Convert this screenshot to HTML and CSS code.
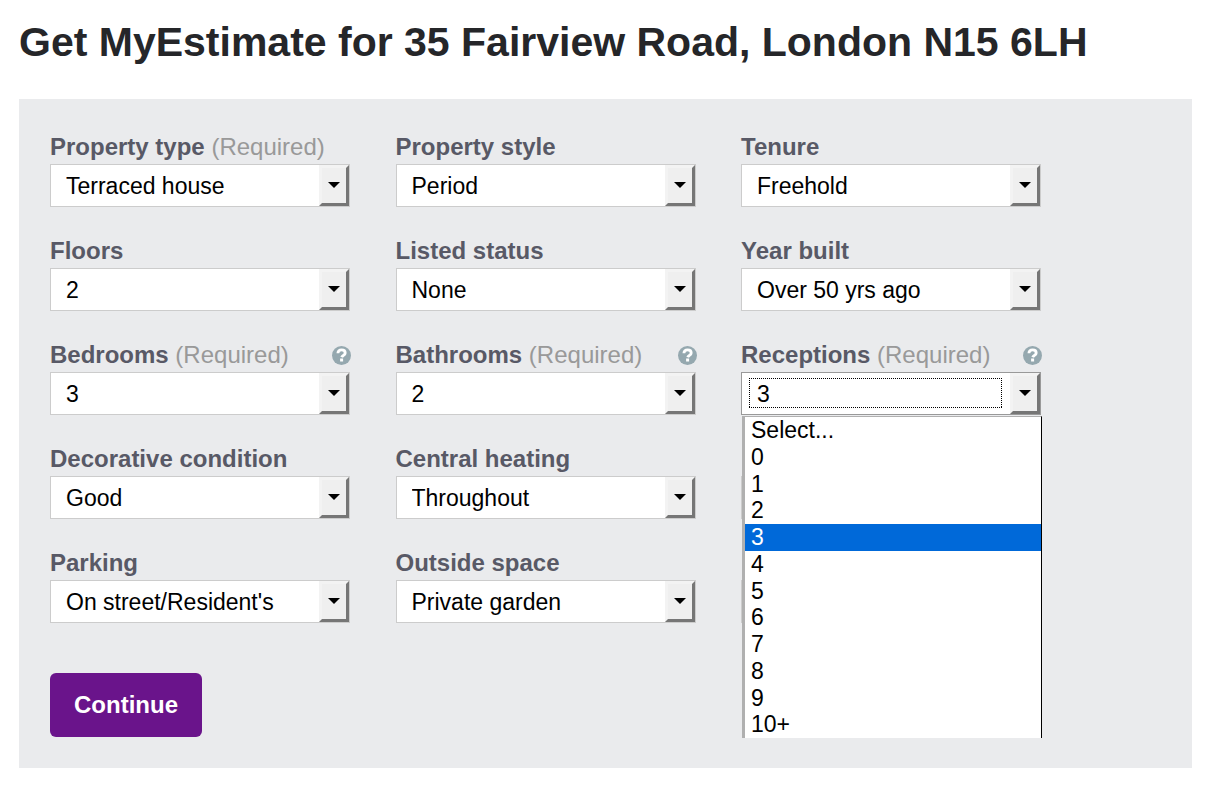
FILE: index.html
```html
<!DOCTYPE html>
<html lang="en">
<head>
    <meta charset="utf-8">
    <title>Get MyEstimate</title>
    <link rel="stylesheet" href="styles.css">
</head>
<body>
    <svg class="icon-defs" aria-hidden="true">
        <symbol id="help-icon" viewBox="0 0 19 19">
            <circle cx="9.5" cy="9.5" r="9.5" fill="#95a8af"/>
            <path d="M5.9 7.3C6 5 7.5 3.9 9.6 3.9c2.1 0 3.6 1.1 3.6 3 0 2.3-2.8 2.4-3.5 4.4" fill="none" stroke="#fff" stroke-width="2.8"/>
            <rect x="8.1" y="12.5" width="3" height="3" fill="#fff"/>
        </symbol>
    </svg>
    <h1 class="page-title">Get MyEstimate for 35 Fairview Road, London N15 6LH</h1>
    <form class="estimate-form">
        <div class="fields">
            <div class="field">
                <div class="field-head">
                    <label for="propertyType">Property type <span class="required">(Required)</span></label>
                </div>
                <div class="select-box">
                    <select id="propertyType"><option>Terraced house</option></select>
                </div>
            </div>
            <div class="field">
                <div class="field-head"><label for="propertyStyle">Property style</label></div>
                <div class="select-box">
                    <select id="propertyStyle"><option>Period</option></select>
                </div>
            </div>
            <div class="field">
                <div class="field-head"><label for="tenure">Tenure</label></div>
                <div class="select-box">
                    <select id="tenure"><option>Freehold</option></select>
                </div>
            </div>

            <div class="field">
                <div class="field-head"><label for="floors">Floors</label></div>
                <div class="select-box">
                    <select id="floors"><option>2</option></select>
                </div>
            </div>
            <div class="field">
                <div class="field-head"><label for="listedStatus">Listed status</label></div>
                <div class="select-box">
                    <select id="listedStatus"><option>None</option></select>
                </div>
            </div>
            <div class="field">
                <div class="field-head"><label for="yearBuilt">Year built</label></div>
                <div class="select-box">
                    <select id="yearBuilt"><option>Over 50 yrs ago</option></select>
                </div>
            </div>

            <div class="field">
                <div class="field-head">
                    <label for="bedrooms">Bedrooms <span class="required">(Required)</span></label>
                    <button type="button" class="help" aria-label="Help with bedrooms"><svg><use href="#help-icon"/></svg></button>
                </div>
                <div class="select-box">
                    <select id="bedrooms"><option>3</option></select>
                </div>
            </div>
            <div class="field">
                <div class="field-head">
                    <label for="bathrooms">Bathrooms <span class="required">(Required)</span></label>
                    <button type="button" class="help" aria-label="Help with bathrooms"><svg><use href="#help-icon"/></svg></button>
                </div>
                <div class="select-box">
                    <select id="bathrooms"><option>2</option></select>
                </div>
            </div>
            <div class="field">
                <div class="field-head">
                    <label for="receptions">Receptions <span class="required">(Required)</span></label>
                    <button type="button" class="help" aria-label="Help with receptions"><svg><use href="#help-icon"/></svg></button>
                </div>
                <div class="select-box open">
                    <select id="receptions"><option>3</option></select>
                    <ul class="options" role="listbox" aria-label="Receptions">
                        <li role="option">Select...</li>
                        <li role="option">0</li>
                        <li role="option">1</li>
                        <li role="option">2</li>
                        <li role="option" class="selected" aria-selected="true">3</li>
                        <li role="option">4</li>
                        <li role="option">5</li>
                        <li role="option">6</li>
                        <li role="option">7</li>
                        <li role="option">8</li>
                        <li role="option">9</li>
                        <li role="option">10+</li>
                    </ul>
                </div>
            </div>

            <div class="field">
                <div class="field-head"><label for="condition">Decorative condition</label></div>
                <div class="select-box">
                    <select id="condition"><option>Good</option></select>
                </div>
            </div>
            <div class="field">
                <div class="field-head"><label for="heating">Central heating</label></div>
                <div class="select-box">
                    <select id="heating"><option>Throughout</option></select>
                </div>
            </div>
            <div class="field">
                <div class="field-head"></div>
                <div class="select-box">
                    <select aria-label="Windows"><option></option></select>
                </div>
            </div>

            <div class="field">
                <div class="field-head"><label for="parking">Parking</label></div>
                <div class="select-box">
                    <select id="parking"><option>On street/Resident's</option></select>
                </div>
            </div>
            <div class="field">
                <div class="field-head"><label for="outside">Outside space</label></div>
                <div class="select-box">
                    <select id="outside"><option>Private garden</option></select>
                </div>
            </div>
            <div class="field">
                <div class="field-head"></div>
                <div class="select-box">
                    <select aria-label="Outlook"><option></option></select>
                </div>
            </div>
        </div>
        <button type="submit" class="continue-button">Continue</button>
    </form>
</body>
</html>
```

FILE: styles.css
```css
*,
*::before,
*::after {
    box-sizing: border-box;
}

body {
    margin: 0;
    padding: 18px 20px 22px 19px;
    background-color: #fff;
    font-family: "Liberation Sans", Arial, sans-serif;
    color: #000;
}

.icon-defs {
    display: none;
}

.page-title {
    margin: 0 0 33px;
    font-size: 41px;
    line-height: 48px;
    color: #252629;
}

.estimate-form {
    padding: 35px 31px 31px;
    background-color: #eaebed;
}

.fields {
    display: grid;
    grid-template-columns: repeat(3, 300px);
    justify-content: space-between;
    row-gap: 31px;
    max-width: 991px;
}

.field-head {
    display: flex;
    justify-content: space-between;
    align-items: center;
    height: 30px;
    margin-right: -1px;
    padding-bottom: 4px;
    font-size: 24px;
    font-weight: bold;
    line-height: 26px;
    color: #585966;
}

.required {
    font-weight: normal;
    color: #999;
}

.help {
    width: 19px;
    height: 19px;
    padding: 0;
    border: none;
    background: none;
    cursor: pointer;
}

.help svg {
    display: block;
    width: 19px;
    height: 19px;
}

.select-box {
    position: relative;
    height: 43px;
}

.select-box select {
    display: block;
    width: 100%;
    height: 100%;
    padding: 0 40px 0 15px;
    border: 1px solid #ccc;
    border-radius: 0;
    background-color: #fff;
    appearance: none;
    font-family: inherit;
    font-size: 23px;
    color: #000;
}

/* raised arrow button */
.select-box::after {
    content: "";
    position: absolute;
    top: 1px;
    right: 1px;
    bottom: 1px;
    width: 30px;
    border: 3px solid;
    border-color: #f3f3f3 #767676 #767676 #f3f3f3;
    background: #efefef;
    pointer-events: none;
}

.select-box::before {
    content: "";
    position: absolute;
    z-index: 1;
    top: 18px;
    right: 10px;
    border: 6px solid transparent;
    border-top: 6px solid #000;
    border-bottom: none;
    pointer-events: none;
}

/* dotted focus ring inside the open box */
.open select {
    border-color: #999;
    outline: none;
    background-image:
        repeating-linear-gradient(90deg, #000 0 1px, #fff 1px 2px),
        repeating-linear-gradient(90deg, #000 0 1px, #fff 1px 2px),
        repeating-linear-gradient(#000 0 1px, #fff 1px 2px),
        repeating-linear-gradient(#000 0 1px, #fff 1px 2px);
    background-size: 253px 1px, 253px 1px, 1px 30px, 1px 30px;
    background-position: 7px 5px, 7px 34px, 7px 5px, 259px 5px;
    background-repeat: no-repeat;
}

.options {
    position: absolute;
    top: 44px;
    left: 1px;
    z-index: 3;
    display: grid;
    grid-auto-rows: 1fr;
    width: 300px;
    height: 322px;
    margin: 0;
    padding: 0;
    list-style: none;
    border-top: 1px solid #b0b0b0;
    border-left: 3px solid #b0b0b0;
    border-right: 1px solid #000;
    background-color: #fff;
    font-size: 23px;
    line-height: 26px;
}

.options li {
    padding-left: 6px;
}

.options .selected {
    background-color: #0069d9;
    color: #fff;
}

.continue-button {
    display: block;
    height: 64px;
    margin-top: 50px;
    padding: 0 24px;
    border: none;
    border-radius: 6px;
    background-color: #6a148b;
    font-family: inherit;
    font-size: 24px;
    font-weight: bold;
    color: #fff;
    cursor: pointer;
}
```
